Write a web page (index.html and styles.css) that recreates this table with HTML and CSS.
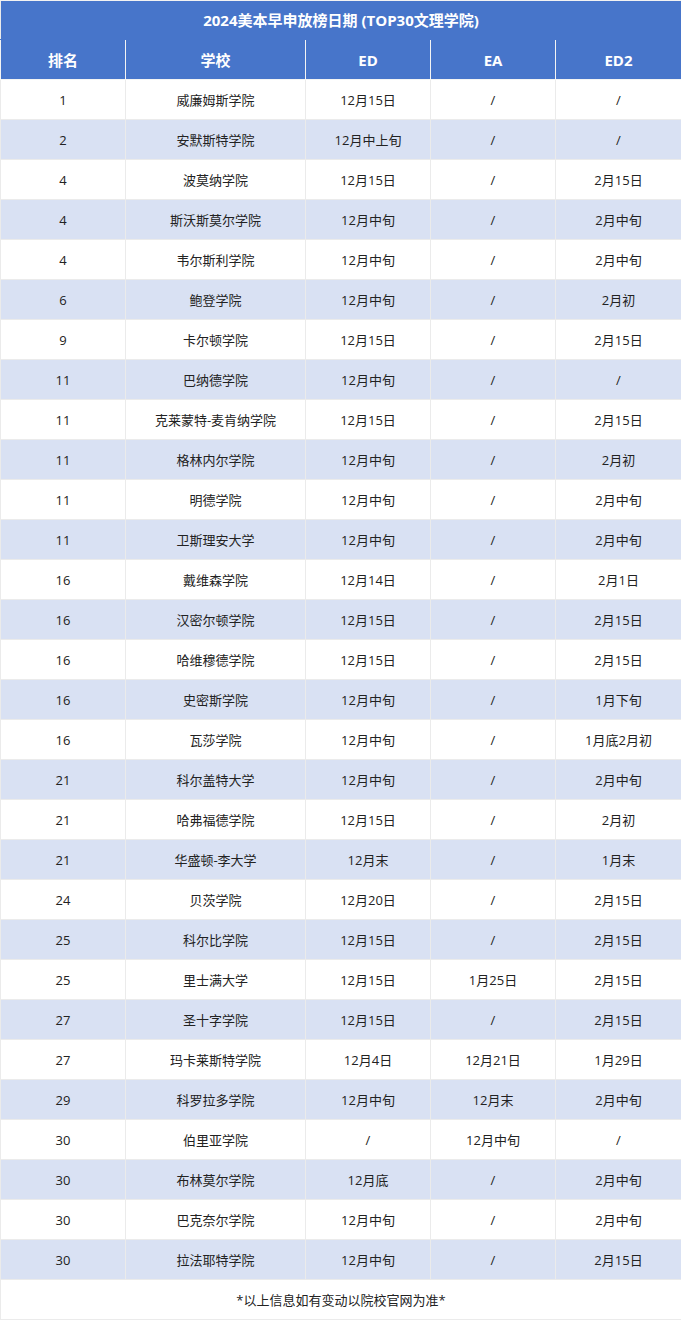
FILE: index.html
```html
<!DOCTYPE html>
<html lang="zh-CN">
<head>
<meta charset="utf-8">
<title>2024美本早申放榜日期</title>
<link rel="stylesheet" href="styles.css">
</head>
<body>
<table class="sheet">
  <colgroup>
    <col class="c-rank"><col class="c-school"><col class="c-ed"><col class="c-ea"><col class="c-ed2">
  </colgroup>
  <thead>
    <tr class="title"><th colspan="5">2024美本早申放榜日期 (TOP30文理学院)</th></tr>
    <tr class="head"><th>排名</th><th>学校</th><th>ED</th><th>EA</th><th>ED2</th></tr>
  </thead>
  <tbody>
    <tr><td>1</td><td>威廉姆斯学院</td><td>12月15日</td><td>/</td><td>/</td></tr>
    <tr><td>2</td><td>安默斯特学院</td><td>12月中上旬</td><td>/</td><td>/</td></tr>
    <tr><td>4</td><td>波莫纳学院</td><td>12月15日</td><td>/</td><td>2月15日</td></tr>
    <tr><td>4</td><td>斯沃斯莫尔学院</td><td>12月中旬</td><td>/</td><td>2月中旬</td></tr>
    <tr><td>4</td><td>韦尔斯利学院</td><td>12月中旬</td><td>/</td><td>2月中旬</td></tr>
    <tr><td>6</td><td>鲍登学院</td><td>12月中旬</td><td>/</td><td>2月初</td></tr>
    <tr><td>9</td><td>卡尔顿学院</td><td>12月15日</td><td>/</td><td>2月15日</td></tr>
    <tr><td>11</td><td>巴纳德学院</td><td>12月中旬</td><td>/</td><td>/</td></tr>
    <tr><td>11</td><td>克莱蒙特-麦肯纳学院</td><td>12月15日</td><td>/</td><td>2月15日</td></tr>
    <tr><td>11</td><td>格林内尔学院</td><td>12月中旬</td><td>/</td><td>2月初</td></tr>
    <tr><td>11</td><td>明德学院</td><td>12月中旬</td><td>/</td><td>2月中旬</td></tr>
    <tr><td>11</td><td>卫斯理安大学</td><td>12月中旬</td><td>/</td><td>2月中旬</td></tr>
    <tr><td>16</td><td>戴维森学院</td><td>12月14日</td><td>/</td><td>2月1日</td></tr>
    <tr><td>16</td><td>汉密尔顿学院</td><td>12月15日</td><td>/</td><td>2月15日</td></tr>
    <tr><td>16</td><td>哈维穆德学院</td><td>12月15日</td><td>/</td><td>2月15日</td></tr>
    <tr><td>16</td><td>史密斯学院</td><td>12月中旬</td><td>/</td><td>1月下旬</td></tr>
    <tr><td>16</td><td>瓦莎学院</td><td>12月中旬</td><td>/</td><td>1月底2月初</td></tr>
    <tr><td>21</td><td>科尔盖特大学</td><td>12月中旬</td><td>/</td><td>2月中旬</td></tr>
    <tr><td>21</td><td>哈弗福德学院</td><td>12月15日</td><td>/</td><td>2月初</td></tr>
    <tr><td>21</td><td>华盛顿-李大学</td><td>12月末</td><td>/</td><td>1月末</td></tr>
    <tr><td>24</td><td>贝茨学院</td><td>12月20日</td><td>/</td><td>2月15日</td></tr>
    <tr><td>25</td><td>科尔比学院</td><td>12月15日</td><td>/</td><td>2月15日</td></tr>
    <tr><td>25</td><td>里士满大学</td><td>12月15日</td><td>1月25日</td><td>2月15日</td></tr>
    <tr><td>27</td><td>圣十字学院</td><td>12月15日</td><td>/</td><td>2月15日</td></tr>
    <tr><td>27</td><td>玛卡莱斯特学院</td><td>12月4日</td><td>12月21日</td><td>1月29日</td></tr>
    <tr><td>29</td><td>科罗拉多学院</td><td>12月中旬</td><td>12月末</td><td>2月中旬</td></tr>
    <tr><td>30</td><td>伯里亚学院</td><td>/</td><td>12月中旬</td><td>/</td></tr>
    <tr><td>30</td><td>布林莫尔学院</td><td>12月底</td><td>/</td><td>2月中旬</td></tr>
    <tr><td>30</td><td>巴克奈尔学院</td><td>12月中旬</td><td>/</td><td>2月中旬</td></tr>
    <tr><td>30</td><td>拉法耶特学院</td><td>12月中旬</td><td>/</td><td>2月15日</td></tr>
  </tbody>
  <tfoot>
    <tr class="note"><td colspan="5">*以上信息如有变动以院校官网为准*</td></tr>
  </tfoot>
</table>
</body>
</html>
```
FILE: styles.css
```css
html, body {
  margin: 0;
  padding: 0;
  background: #ffffff;
}
body {
  font-family: "Open Sans", "Noto Sans CJK SC", sans-serif;
  color: #222222;
  font-size: 13px;
}
.sheet {
  width: 681px;
  border-collapse: collapse;
  table-layout: fixed;
}
.c-rank { width: 125px; }
.c-school { width: 180px; }
.c-ed { width: 125px; }
.c-ea { width: 125px; }
.c-ed2 { width: 126px; }
.sheet th, .sheet td {
  height: 39px;
  padding: 0;
  text-align: center;
  vertical-align: middle;
  border: 1px solid #ebebeb;
  line-height: 18px;
}
.title th {
  height: 38px;
  background: #4775ca;
  color: #ffffff;
  font-weight: 700;
  font-size: 15px;
  border-color: #4775ca;
  border-top-color: #f2f2f2;
  border-left-color: #ebebeb;
  border-right-color: #ebebeb;
}
.head th {
  background: #4775ca;
  color: #ffffff;
  font-weight: 700;
  font-size: 15px;
  border-color: #f4f4f4;
  border-top-color: #ebebeb;
}
tbody tr:nth-child(even) td {
  background: #d9e1f3;
}
.note td {
  height: 39px;
  background: #ffffff;
}
```
